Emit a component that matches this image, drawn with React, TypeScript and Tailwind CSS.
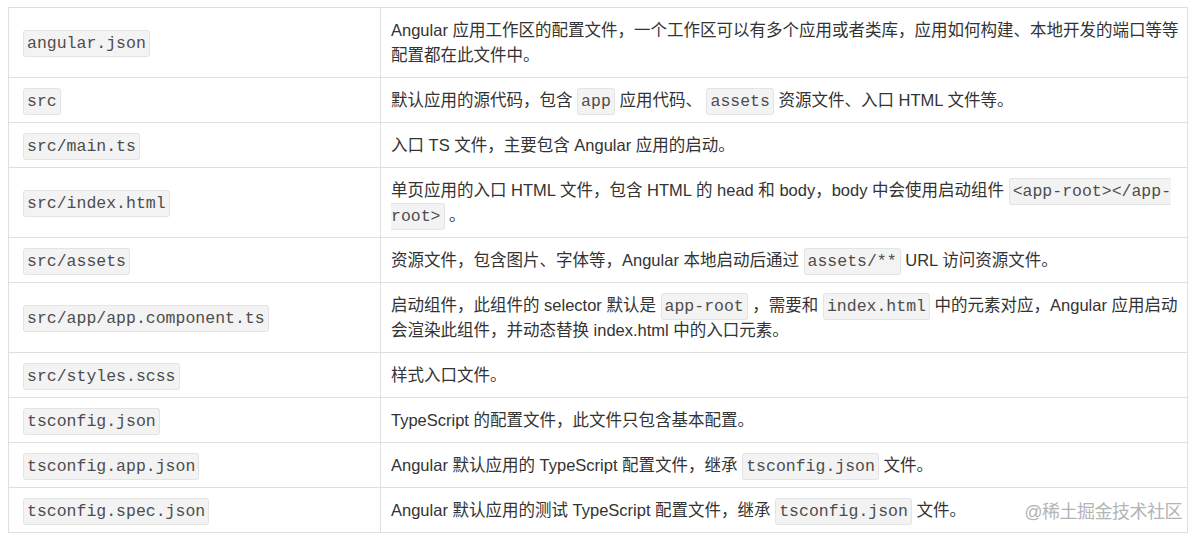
import type { ReactNode } from 'react';

const sans = 'font-["Liberation_Sans","Noto_Sans_CJK_SC",sans-serif]';

function Code({ children }: { children: ReactNode }) {
  return (
    <code className='font-["Liberation_Mono",monospace] text-[16.5px] leading-none text-[#4d4d4d] bg-[#f3f3f3] border border-[#e4e4e4] rounded-[3px] px-[3px] py-[3px]'>
      {children}
    </code>
  );
}

interface Row {
  file: string;
  desc: ReactNode;
}

const rows: Row[] = [
  {
    file: 'angular.json',
    desc: (
      <>
        Angular 应用工作区的配置文件，一个工作区可以有多个应用或者类库，应用如何构建、本地开发的端口等等
        <br />
        配置都在此文件中。
      </>
    ),
  },
  {
    file: 'src',
    desc: (
      <>
        默认应用的源代码，包含 <Code>app</Code> 应用代码、 <Code>assets</Code> 资源文件、入口 HTML 文件等。
      </>
    ),
  },
  { file: 'src/main.ts', desc: '入口 TS 文件，主要包含 Angular 应用的启动。' },
  {
    file: 'src/index.html',
    desc: (
      <>
        单页应用的入口 HTML 文件，包含 HTML 的 head 和 body，body 中会使用启动组件{' '}
        <Code>
          &lt;app-root&gt;&lt;/app-
          <br />
          root&gt;
        </Code>{' '}
        。
      </>
    ),
  },
  {
    file: 'src/assets',
    desc: (
      <>
        资源文件，包含图片、字体等，Angular 本地启动后通过 <Code>assets/**</Code> URL 访问资源文件。
      </>
    ),
  },
  {
    file: 'src/app/app.component.ts',
    desc: (
      <>
        启动组件，此组件的 selector 默认是 <Code>app-root</Code> ，需要和 <Code>index.html</Code> 中的元素对应，Angular 应用启动
        <br />
        会渲染此组件，并动态替换 index.html 中的入口元素。
      </>
    ),
  },
  { file: 'src/styles.scss', desc: '样式入口文件。' },
  { file: 'tsconfig.json', desc: 'TypeScript 的配置文件，此文件只包含基本配置。' },
  {
    file: 'tsconfig.app.json',
    desc: (
      <>
        Angular 默认应用的 TypeScript 配置文件，继承 <Code>tsconfig.json</Code> 文件。
      </>
    ),
  },
  {
    file: 'tsconfig.spec.json',
    desc: (
      <>
        Angular 默认应用的测试 TypeScript 配置文件，继承 <Code>tsconfig.json</Code> 文件。
      </>
    ),
  },
];

export default function App() {
  return (
    <div className={`relative w-[1200px] h-[542px] bg-white overflow-hidden ${sans}`}>
      <div className="pt-[7px] pl-[8px]">
        <table className="border-collapse w-[1180px] table-fixed text-[16.5px] leading-[25px] text-[#333]">
          <colgroup>
            <col className="w-[372px]" />
            <col />
          </colgroup>
          <tbody>
            {rows.map((row) => (
              <tr key={row.file}>
                <td className="border border-[#dfdfdf] px-[14px] py-[9.5px] align-middle">
                  <Code>{row.file}</Code>
                </td>
                <td className="border border-[#dfdfdf] px-[10px] py-[9.5px] align-middle whitespace-nowrap">
                  {row.desc}
                </td>
              </tr>
            ))}
          </tbody>
        </table>
      </div>

      {/* watermark */}
      <div className="absolute right-[18px] top-[501px] text-[18px] leading-[22px] text-[#b4b4b4] tracking-[-0.5px]">
        @稀土掘金技术社区
      </div>
    </div>
  );
}
